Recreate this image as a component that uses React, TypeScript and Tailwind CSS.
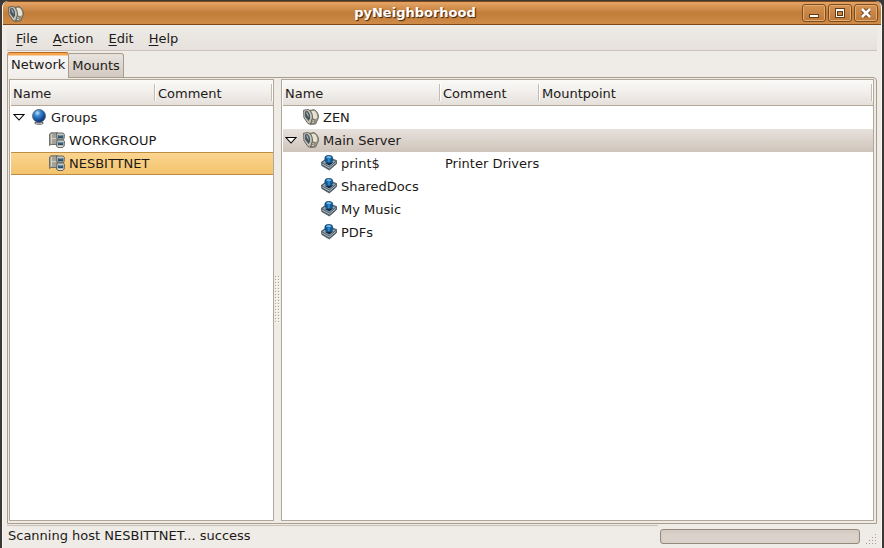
import { useState } from 'react';
import type { ReactNode } from 'react';

function HostIcon() {
  return (
    <svg className="h-4 w-4 shrink-0" viewBox="0 0 16 16" aria-hidden="true">
      <path d="M6 1.5 11 .6Q15.6 3 15.6 8.5L12.6 15 7.5 15.4Z" fill="#a19d8c" stroke="#5e5b50" strokeWidth=".8" />
      <path d="M8.5 2 11.5 2Q14.6 4.5 14 8.5L11 12.5Z" fill="#e6e2d3" />
      <path d="M.6 1.2 5.5.5Q9.8 3.5 9.4 9L7.5 15.2 5 14.6.9 8.6Z" fill="#c4c2b5" stroke="#5b5a54" strokeWidth=".9" />
      <path d="M2 2.4 4.6 2Q7.4 4.5 7 9.4L5.6 12 2.2 7.8Z" fill="#46545e" />
      <path d="M3 3.4 4.4 3.2Q6 5.5 5.4 8.4Z" fill="#9fb2bd" />
      <path d="m7.7 15 2.3-5.5 3 1-1.8 4.6Z" fill="#7b7768" />
      <path d="m9.4 11.7 2.2.3M9 13.4l2 .3" stroke="#f2edd9" strokeWidth=".8" />
    </svg>
  );
}

function GlobeIcon() {
  return (
    <svg className="h-4 w-4 shrink-0" viewBox="0 0 16 16" aria-hidden="true">
      <defs>
        <radialGradient id="globe" cx=".38" cy=".28" r=".75">
          <stop offset="0" stopColor="#c2e4fa" />
          <stop offset=".3" stopColor="#3d8cd2" />
          <stop offset=".75" stopColor="#144b96" />
          <stop offset="1" stopColor="#09265b" />
        </radialGradient>
      </defs>
      <ellipse cx="8" cy="14" rx="4.6" ry="1.8" fill="#6d7173" />
      <path d="M5 14.4q3-1 6 0" stroke="#d6d9d7" fill="none" />
      <circle cx="8" cy="6.9" r="6.5" fill="url(#globe)" stroke="#565f70" strokeWidth=".8" />
    </svg>
  );
}

function GroupIcon() {
  return (
    <svg className="h-4 w-4 shrink-0" viewBox="0 0 16 16" aria-hidden="true">
      <path d="M.5 2 2 .8h6.5v11.7H2L.5 13.5Z" fill="#a3a298" stroke="#66655e" strokeWidth=".9" />
      <path d="M2.5 2v9.5M3 6.5h4" stroke="#d3d1c5" strokeWidth="1" />
      <path d="M7.6 1h6.6l1.2 1.5-.4 4.7H8ZM8 8h6.4l1.1 1.4-.3 4.6-1.4 1.5H8.8L7.5 14Z" fill="#c8c7bb" stroke="#55595b" strokeWidth=".9" />
      <path d="M9 3h5.2v3.2H9ZM9 10h5.2v3.2H9Z" fill="#29506e" />
      <path d="M9.4 3.7h4.3M9.4 10.7h4.3" stroke="#79a7bd" strokeWidth="1" />
      <path d="M9.5 14.3h4" stroke="#f2eee0" />
    </svg>
  );
}

function ShareIcon() {
  return (
    <svg className="h-4 w-4 shrink-0" viewBox="0 0 16 16" aria-hidden="true">
      <path d="m.5 7 6.5-4 8.5 2.4v3.4L8.3 15 .8 10.6Z" fill="#465664" stroke="#4a535b" strokeWidth=".8" />
      <path d="m1.3 7.4 5.6-3.6 7.8 2.2-6.4 5.8Z" fill="#94a6b1" />
      <path d="m1.2 9 7.1 4.1 6.6-5.6" stroke="#c8d1d5" strokeWidth=".9" fill="none" />
      <path d="m3.6 7.8 4.6 2.8 4.4-3.4" fill="#16283d" />
      <path d="M3.8 3Q4 .3 7.8.3T11.8 3v2.6L10 8H6L4 5.6Z" fill="#125a9b" stroke="#183b61" strokeWidth=".6" />
      <path d="M5.2 2Q7.8 0 10.4 2l-.6 1.2H5.8Z" fill="#69b8e5" />
      <path d="M7.8 3.2v4" stroke="#2b8bc9" strokeWidth="2" />
    </svg>
  );
}

const icons = { host: HostIcon, globe: GlobeIcon, group: GroupIcon, share: ShareIcon };

type Row = { name: string; icon: keyof typeof icons; level: number; comment?: string; parent?: boolean };

const groups: Row[] = [
  { name: 'Groups', icon: 'globe', level: 0, parent: true },
  { name: 'WORKGROUP', icon: 'group', level: 1 },
  { name: 'NESBITTNET', icon: 'group', level: 1 },
];

const hosts: Row[] = [
  { name: 'ZEN', icon: 'host', level: 0 },
  { name: 'Main Server', icon: 'host', level: 0, parent: true },
  { name: 'print$', icon: 'share', level: 1, comment: 'Printer Drivers' },
  { name: 'SharedDocs', icon: 'share', level: 1 },
  { name: 'My Music', icon: 'share', level: 1 },
  { name: 'PDFs', icon: 'share', level: 1 },
];

type TreeProps = { label: string; columns: { title: string; width: string }[]; rows: Row[]; initial: string; highlight: string };

function Tree({ label, columns, rows, initial, highlight }: TreeProps) {
  const [open, setOpen] = useState(true);
  const [selected, setSelected] = useState(initial);
  const visible = rows.filter((row) => open || row.level === 0);
  return (
    <table aria-label={label} className="w-full table-fixed border-separate border-spacing-0 text-left">
      <colgroup>
        {columns.map((column) => <col key={column.title} className={column.width} />)}
      </colgroup>
      <thead>
        <tr>
          {columns.map((column) => (
            <th key={column.title} scope="col" className="h-[26px] border-b border-[#b3a897] bg-linear-to-b from-[#fbfaf8] via-[#f1eeeb] to-[#e5e0da] p-0 font-normal">
              <div className="flex items-center justify-between pl-0.5">
                <span className="pt-0.5">{column.title}</span>
                <span className="h-[17px] w-0.5 border-l border-[#c5bcb0] bg-white" />
              </div>
            </th>
          ))}
        </tr>
      </thead>
      <tbody>
        {visible.map((row) => {
          const Icon = icons[row.icon];
          return (
            <tr key={row.name} onClick={() => setSelected(row.name)} aria-selected={row.name === selected} className={row.name === selected ? highlight : ''}>
              <td className="h-[23px] p-0">
                <div className="flex items-center">
                  <span className={row.level === 0 ? 'flex w-5 shrink-0 items-center pl-0.5' : 'w-[38px] shrink-0'}>
                    {row.parent && (
                      <button type="button" aria-label={`Toggle ${row.name}`} aria-expanded={open} onClick={() => setOpen(!open)}>
                        <svg className="mb-0.5 h-3 w-3" viewBox="0 0 12 12">
                          <path d="M1 3.5h10l-5 5.5Z" fill="#fff" stroke="#000" strokeWidth="1.1" />
                        </svg>
                      </button>
                    )}
                  </span>
                  <span className="pb-0.5"><Icon /></span>
                  <span className="pl-1 whitespace-nowrap">{row.name}</span>
                </div>
              </td>
              {columns.slice(1).map((column) => (
                <td key={column.title} className="p-0 pl-1 whitespace-nowrap">{column.title === 'Comment' ? row.comment : ''}</td>
              ))}
            </tr>
          );
        })}
      </tbody>
    </table>
  );
}

function WindowButton({ label, children }: { label: string; children: ReactNode }) {
  return (
    <button type="button" aria-label={label} className="flex h-[18px] w-6 items-center justify-center rounded-[3px] border border-[#7c4c1d] bg-linear-to-b from-[#d49251] to-[#bd783a] inset-ring inset-ring-[#e3ad75]">
      <svg className="h-3 w-3" viewBox="0 0 12 12" aria-hidden="true">{children}</svg>
    </button>
  );
}

const menus = ['File', 'Action', 'Edit', 'Help'];

export default function App() {
  const [tab, setTab] = useState('Network');
  return (
    <div className="h-screen bg-[#3b3835] px-0.5 pt-px font-['DejaVu_Sans',sans-serif] text-[13px] leading-4 text-[#1c1a18]">
      <div className="flex h-full flex-col overflow-hidden rounded-t-md border-x border-[#f8f6f3] bg-[#efebe7]">
        <header className="-mx-px flex h-6 shrink-0 items-center rounded-t-md border-t border-b border-[#7f4a1b] bg-linear-to-b from-[#e2a162] from-5% via-[#c17c38] via-50% to-[#cf8b48] pr-1 pl-1.5">
          <span className="pt-0.5"><HostIcon /></span>
          <h1 className="flex-1 pl-1 text-center font-bold text-white [text-shadow:1px_1px_1px_#3b220c]">pyNeighborhood</h1>
          <div className="flex gap-0.5">
            <WindowButton label="Minimize">
              <path d="M1 7h10v4H1Z" fill="#633a12" />
              <path d="M2 8h8v2H2Z" fill="#fff" />
            </WindowButton>
            <WindowButton label="Maximize">
              <path d="M1 1h10v10H1Z" fill="#633a12" />
              <path d="M2 2h8v8H2Z" fill="#fff" />
              <path d="M3 4h6v5H3Z" fill="#633a12" />
              <path d="M4 5h4v3H4Z" fill="#c58345" />
            </WindowButton>
            <WindowButton label="Close">
              <path d="m2.5 2.5 7 7m0-7-7 7" stroke="#633a12" strokeWidth="4.4" />
              <path d="m2 2 8 8m0-8-8 8" stroke="#fff" strokeWidth="2.6" />
            </WindowButton>
          </div>
        </header>

        <nav aria-label="Main menu" className="mx-1 flex h-[26px] shrink-0 items-center gap-[15px] border-b border-[#c9c2ba] bg-linear-to-b from-[#eeebe7] to-[#e6e1dc] pt-0.5 pl-[9px]">
          {menus.map((menu) => (
            <button key={menu} type="button">
              <span className="underline underline-offset-2">{menu[0]}</span>{menu.slice(1)}
            </button>
          ))}
        </nav>

        <main className="mx-1 flex min-h-0 flex-1 flex-col pt-px">
          <div role="tablist" className="z-10 -mb-px flex h-[26px] shrink-0 items-end">
            {['Network', 'Mounts'].map((name) => (
              <button
                key={name}
                type="button"
                role="tab"
                aria-selected={tab === name}
                onClick={() => setTab(name)}
                className={
                  tab === name
                    ? 'h-[26px] rounded-t-[3px] border-x border-t border-x-[#a89c8c] border-t-[#b8691f] bg-linear-to-b from-[#f6a64e] from-8% via-[#f8f6f4] via-12% to-[#f1eeea] px-[3px] pb-px'
                    : 'h-[25px] rounded-tr-[3px] border-y border-r border-[#a89c8c] bg-linear-to-b from-[#e8e3de] to-[#d2c9c0] px-[3px]'
                }
              >
                {name}
              </button>
            ))}
          </div>
          <div className="flex min-h-0 flex-1 rounded-tr-sm border border-[#a89c8c] p-px pr-0.5 pb-0.5">
            <section className="w-[265px] shrink-0 border border-[#b3a897] bg-white pl-px">
              <Tree
                label="Groups"
                columns={[{ title: 'Name', width: 'w-[145px]' }, { title: 'Comment', width: '' }]}
                rows={groups}
                initial="NESBITTNET"
                highlight="bg-linear-to-b from-[#fcd591] to-[#f2c36c] [&>td]:border-y [&>td]:border-[#bd8d43]"
              />
            </section>
            <div role="separator" aria-orientation="vertical" className="flex w-[7px] shrink-0 cursor-col-resize items-center justify-center">
              <svg className="h-12 w-[5px]" aria-hidden="true">
                <defs>
                  <pattern id="grip" width="3" height="3" patternUnits="userSpaceOnUse">
                    <path d="M0 0h1v1H0z" fill="#b0a698" />
                    <path d="M1 1h1v1H1z" fill="#fff" />
                  </pattern>
                </defs>
                <rect width="5" height="48" fill="url(#grip)" />
              </svg>
            </div>
            <section className="min-w-0 flex-1 border border-[#b3a897] bg-white pl-px">
              <Tree
                label="Hosts and shares"
                columns={[{ title: 'Name', width: 'w-[158px]' }, { title: 'Comment', width: 'w-[99px]' }, { title: 'Mountpoint', width: '' }]}
                rows={hosts}
                initial="Main Server"
                highlight="bg-linear-to-b from-[#e7e1dc] to-[#cfc4bb]"
              />
            </section>
          </div>
        </main>

        <footer className="flex h-6 shrink-0 items-start pr-1 pl-1">
          <div role="status" className="mt-px flex-1 border-t border-[#c9beb1] pt-0.5 pl-px">Scanning host NESBITTNET... success</div>
          <progress aria-label="Scan progress" value={0} max={100} className="mt-[5px] ml-0.5 h-[15px] w-[200px] appearance-none rounded-[3px] border border-[#958979] bg-[#dbd2cb] shadow-inner [&::-webkit-progress-bar]:bg-transparent" />
          <svg className="mt-2 ml-[5px] h-3 w-3" viewBox="0 0 12 12" aria-hidden="true">
            <path d="M10 2h1v1h-1zM7 5h1v1H7zM10 5h1v1h-1zM4 8h1v1H4zM7 8h1v1H7zM10 8h1v1h-1zM1 11h1v1H1zM4 11h1v1H4zM7 11h1v1H7zM10 11h1v1h-1z" fill="#a99e91" />
          </svg>
        </footer>
      </div>
    </div>
  );
}
